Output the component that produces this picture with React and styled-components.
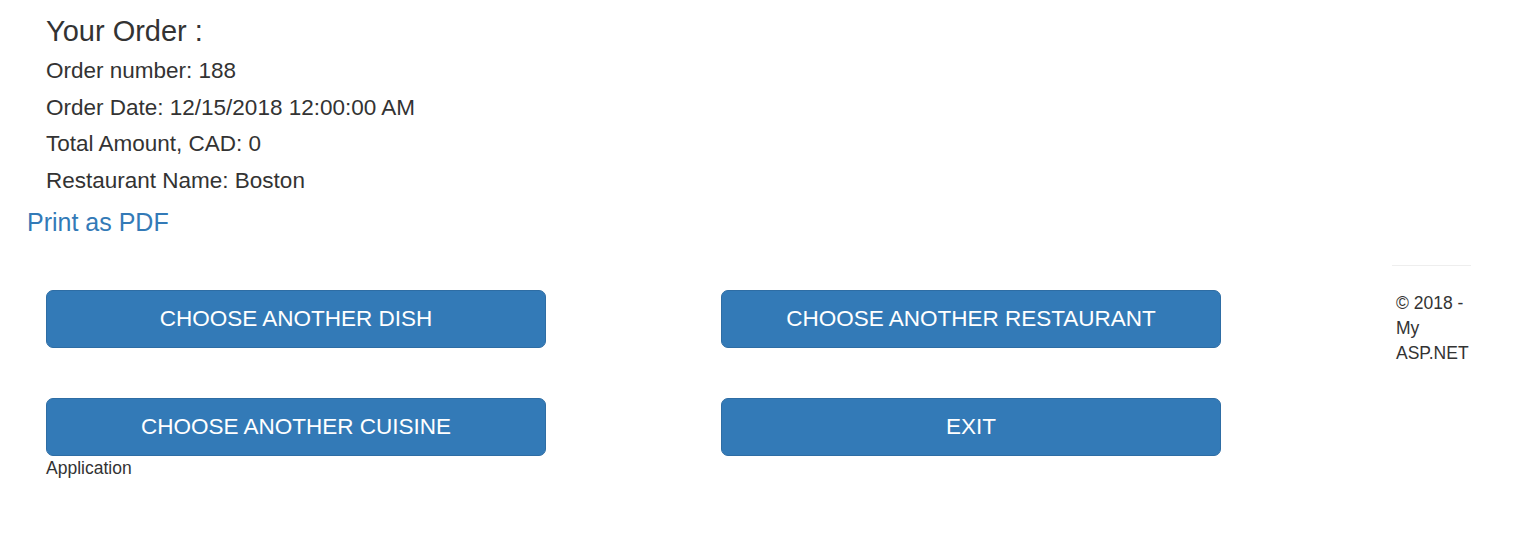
import React from 'react';
import styled, { createGlobalStyle } from 'styled-components';

const GlobalStyle = createGlobalStyle`
  body {
    margin: 0;
    background: #fff;
    font-family: "Liberation Sans", Arial, sans-serif;
    color: #333;
  }
`;

const Page = styled.div`
  display: flex;
  align-items: flex-start;
`;

const Main = styled.div`
  width: 1221px;
  padding-left: 27px;
  box-sizing: border-box;
`;

const OrderInfo = styled.div`
  padding-left: 19px;
`;

const Title = styled.h3`
  margin: 16px 0 5px;
  font-size: 29px;
  font-weight: 400;
  line-height: 1.1;
`;

const InfoLine = styled.div`
  font-size: 22.5px;
  line-height: 36.7px;
`;

const PdfLink = styled.a`
  display: inline-block;
  margin-top: 5.5px;
  font-size: 25px;
  line-height: 35.7px;
  color: #337ab7;
  text-decoration: none;
`;

const ButtonGrid = styled.div`
  display: grid;
  grid-template-columns: 500px 500px;
  column-gap: 175px;
  row-gap: 50.5px;
  margin-top: 49.5px;
  padding-left: 19px;
`;

const ActionButton = styled.button`
  height: 57.5px;
  padding: 0 20px;
  border: 1.25px solid #2e6da4;
  border-radius: 7px;
  background: #337ab7;
  color: #fff;
  font-family: inherit;
  font-size: 22.5px;
  line-height: 30px;
  text-transform: uppercase;
  cursor: pointer;
`;

const SmallText = styled.div`
  padding-left: 19px;
  font-size: 17.5px;
  line-height: 25px;
`;

const Footer = styled.footer`
  width: 79px;
  margin-left: 171px;
  margin-top: 265px;
`;

const Rule = styled.hr`
  margin: 0 0 25px;
  border: 0;
  border-top: 1px solid #eee;
`;

const FooterText = styled.p`
  margin: 0;
  padding-left: 4px;
  font-size: 17.5px;
  line-height: 25px;
`;

const order = {
  number: 188,
  date: '12/15/2018 12:00:00 AM',
  total: 0,
  restaurant: 'Boston',
};

const actions = ['Choose another dish', 'Choose another restaurant', 'Choose another cuisine', 'Exit'];

const App = () => {
  return (
    <>
      <GlobalStyle />
      <Page>
        <Main>
          <OrderInfo>
            <Title>Your Order :</Title>
            <InfoLine>Order number: {order.number}</InfoLine>
            <InfoLine>Order Date: {order.date}</InfoLine>
            <InfoLine>Total Amount, CAD: {order.total}</InfoLine>
            <InfoLine>Restaurant Name: {order.restaurant}</InfoLine>
          </OrderInfo>
          <PdfLink href="#">Print as PDF</PdfLink>
          <ButtonGrid>
            {actions.map((label) => (
              <ActionButton key={label}>{label}</ActionButton>
            ))}
          </ButtonGrid>
          <SmallText>Application</SmallText>
        </Main>
        <Footer>
          <Rule />
          <FooterText>© 2018 - My ASP.NET</FooterText>
        </Footer>
      </Page>
    </>
  );
};

export default App;
